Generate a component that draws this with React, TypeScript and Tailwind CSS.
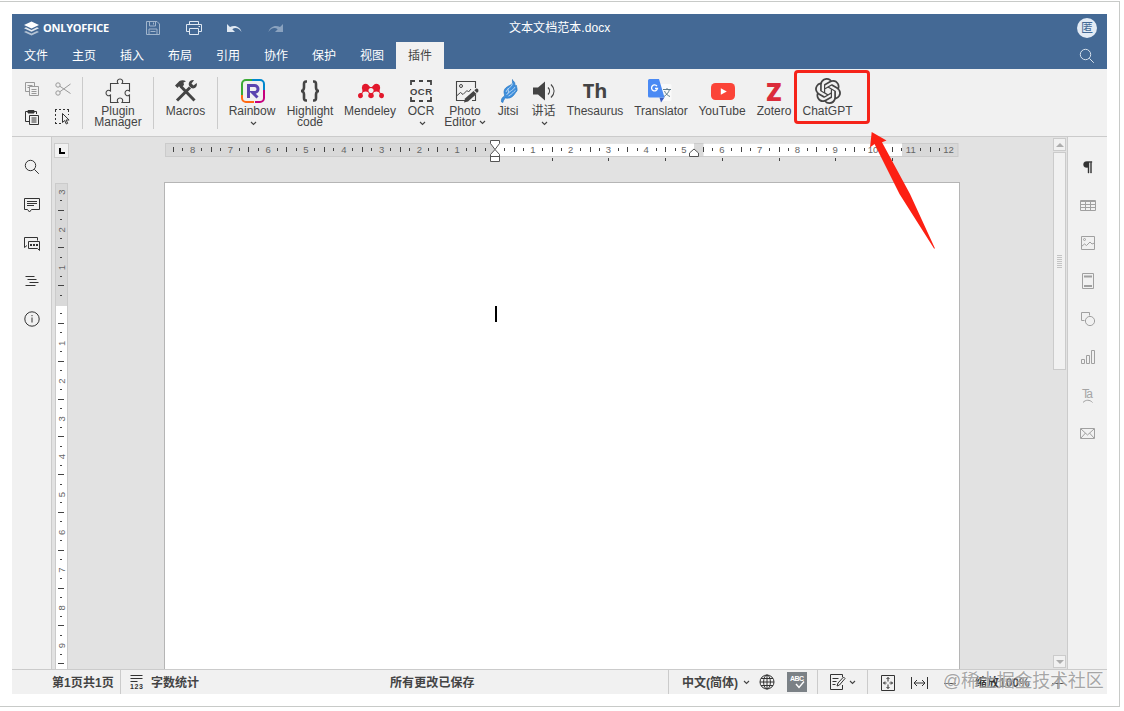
import { ReactNode } from 'react';
import { SiMendeley, SiOpenai } from 'react-icons/si';

const TABS = ['文件', '主页', '插入', '布局', '引用', '协作', '保护', '视图', '插件'];

const CM = 37.8;

function Svg({ w, h, className = '', children }: { w: number; h: number; className?: string; children: ReactNode }) {
  return (
    <svg width={w} height={h} viewBox={`0 0 ${w} ${h}`} fill="none" stroke="currentColor" className={`shrink-0 ${className}`}>
      {children}
    </svg>
  );
}

function Chevron({ className = '' }: { className?: string }) {
  return (
    <Svg w={7} h={5} className={className}>
      <path d="M1 1l2.5 2.5L6 1" strokeWidth="1.1" />
    </Svg>
  );
}

function SearchIcon() {
  return (
    <Svg w={16} h={16}>
      <circle cx="6.5" cy="6.5" r="5.2" />
      <path d="M10.3 10.3l4.5 4.5" />
    </Svg>
  );
}

/* ---------- header ---------- */

function Header() {
  return (
    <header className="flex h-[55px] flex-col bg-[#446995] text-white">
      <div className="flex h-7 items-center">
        <div className="flex w-[497px] items-center pl-3">
          <Svg w={15} h={15} className="mr-1">
            <path d="M0 4l7.5-3.6L15 4 7.5 7.6z" fill="#fff" stroke="none" />
            <path d="M0 7.2l2-.9 5.5 2.6L13 6.3l2 .9-7.5 3.6z" fill="#fff" fillOpacity=".85" stroke="none" />
            <path d="M0 10.9l2-.9 5.5 2.6L13 10l2 .9-7.5 3.6z" fill="#fff" fillOpacity=".6" stroke="none" />
          </Svg>
          <span className="w-[103px] pb-0.5 font-['Open_Sans',sans-serif] text-[11px] font-bold leading-none tracking-[-0.25px]">
            ONLYOFFICE
          </span>
          <div className="flex items-center text-[#dfe8f2]">
            <Svg w={14} h={14} className="opacity-60">
              <path d="M.5.5h10.5l2.5 2.5v10.5h-13zM3.500.5v4.500h6v-4.500M7.500 1.500v2M3 13.500v-5.500h8v5.500M4.500 10.500h5" />
            </Svg>
            <Svg w={16} h={14} className="ml-[26px]">
              <path d="M3.500 3.500v-3h9v3M3.500 10.500h-3v-7h15v7h-3M3.500 7.500h9v6h-9zM12.500 5.500h1.500" />
            </Svg>
            <Svg w={15} h={9} className="ml-[25px]">
              <path d="M0 0v8h8L5.300 5.300C8 3.200 12 3.800 14.500 8 13.500 3 7.800.2 3 3z" fill="currentColor" stroke="none" />
            </Svg>
            <Svg w={15} h={9} className="ml-[26px] opacity-45">
              <path d="M15 0v8H7l2.700-2.700C7 3.200 3 3.800.5 8 1.500 3 7.200.2 12 3z" fill="currentColor" stroke="none" />
            </Svg>
          </div>
        </div>
        <div className="flex-1 text-xs leading-none tracking-[0.05px]">文本文档范本.docx</div>
        <div className="mr-2.5 flex h-5 w-5 items-center justify-center rounded-full bg-[#e3ebf5] text-xs leading-none text-[#446995]">
          匿
        </div>
      </div>
      <nav className="flex h-[27px] items-stretch justify-between">
        <ul className="flex">
          {TABS.map((tab) => (
            <li
              key={tab}
              className={`flex w-12 items-center justify-center text-xs leading-none ${
                tab === '插件' ? 'bg-[#f1f1f1] text-[#444]' : ''
              }`}
            >
              {tab}
            </li>
          ))}
        </ul>
        <div className="mr-3 flex items-center text-[#d5e0ec]">
          <SearchIcon />
        </div>
      </nav>
    </header>
  );
}

/* ---------- plugins toolbar ---------- */

function ToolButton({ className, icon, lines, menu }: { className: string; icon: ReactNode; lines: ReactNode[]; menu?: boolean }) {
  return (
    <button className={`flex shrink-0 flex-col items-center ${className}`}>
      <span className="flex h-7 items-center justify-center text-[#444]">{icon}</span>
      {lines.map((line, i) => (
        <span key={i} className="flex h-[11px] items-center whitespace-nowrap text-xs leading-none">
          {line}
        </span>
      ))}
      {menu && <Chevron className="ml-0.5 mt-[5px]" />}
    </button>
  );
}

function Separator() {
  return <div className="h-[52px] w-px shrink-0 bg-[#cbcbcb]" />;
}

function ClipboardGroup() {
  return (
    <div className="-mt-px grid h-[52px] w-[70px] grid-cols-2 grid-rows-2 place-items-center pl-[5px] pr-1 text-[#333]">
      <Svg w={14} h={14} className="text-[#999]">
        <path d="M4 9.500H.5v-9h9V4M2.500 3.500h5M2.500 5.500h2M4.500 4.500h9v9h-9zM6.500 7.500h5M6.500 9.500h5M6.500 11.500h5" />
      </Svg>
      <Svg w={16} h={14} className="text-[#999]">
        <circle cx="3" cy="3" r="2.200" />
        <circle cx="3" cy="11" r="2.200" />
        <path d="M4.800 4.200L15.500 11.500M4.800 9.800L15.500 2" />
      </Svg>
      <Svg w={14} h={15} className="mt-1">
        <path d="M4 11.500H.5v-10h11V4" />
        <path d="M3 .5h6v2.500H3z" fill="currentColor" />
        <path d="M4.500 5.500h9v9h-9zM6.500 8h5M6.500 10h5M6.500 12h5" />
      </Svg>
      <Svg w={16} h={16} className="mt-1">
        <path d="M0 .5h14M.5 1v14M0 14.500h7M13.500 1v5" strokeDasharray="2 2" />
        <path d="M7.500 4.500v9l2.200-2 1.600 3.500 1.400-.7-1.600-3.300h3z" fill="#f1f1f1" />
      </Svg>
    </div>
  );
}

function PuzzleIcon() {
  return (
    <Svg w={26} h={26} className="mr-px">
      <path
        d="M5.500 5.500h7.500C11.500 3.500 12.500 1 15 1s3.500 2.500 2 4.500h7.500v7.500c-2-1.500-4.500-.5-4.500 2s2.500 3.500 4.500 2v7.500H17c1.500-2 .5-4.500-2-4.500s-3.500 2.500-2 4.500H5.500V17c-2 1.500-4.500.5-4.500-2s2.500-3.500 4.500-2z"
        strokeWidth="1.100"
      />
    </Svg>
  );
}

function MacrosIcon() {
  return (
    <Svg w={24} h={24}>
      <path d="M7 7.500L20.500 21.500" strokeWidth="3" />
      <path d="M3 21.500L16 8.500" strokeWidth="3" />
      <path d="M1 6.500L5.500 2c2-1 4.500-1 6.500.3L9.500 3.500 10 6 6.500 9 5 7.200 3.500 9z" fill="currentColor" stroke="none" />
      <path d="M20 1.200l-2.500 3.300 2 2 3.200-2.500c1 3.500-2 6.500-5.500 5l-2-2C13.500 3.500 17 .2 20 1.200z" fill="currentColor" stroke="none" />
    </Svg>
  );
}

function RainbowIcon() {
  return (
    <Svg w={26} h={26} className="ml-0.5">
      <g strokeWidth="2">
        <path d="M2 17V6a4 4 0 0 1 4-4h6" stroke="#3aaa35" />
        <path d="M12 2h8a4 4 0 0 1 4 4v6" stroke="#0087cd" />
        <path d="M24 12v8a4 4 0 0 1-4 4h-5" stroke="#c6007e" />
        <path d="M14 24H6a4 4 0 0 1-4-4v-3" stroke="#ff6a13" />
      </g>
      <path d="M8.500 20V7.500h6a3.500 3.500 0 0 1 0 7h-2l5 5" stroke="#5b45b0" strokeWidth="3" />
    </Svg>
  );
}

function BracesIcon() {
  return (
    <Svg w={20} h={22}>
      <path d="M7 1.500H6C4.300 1.500 4 2.500 4 4v3.500C4 9.500 3 11 1 11c2 0 3 1.500 3 3.500V18c0 1.500.3 2.500 2 2.500h1" strokeWidth="2.600" />
      <path d="M13 1.500h1c1.700 0 2 1 2 2.500v3.500c0 2 1 3.500 3 3.500-2 0-3 1.500-3 3.500V18c0 1.500-.3 2.500-2 2.500h-1" strokeWidth="2.600" />
    </Svg>
  );
}

function OcrIcon() {
  return (
    <Svg w={24} h={24}>
      <path d="M2 6V2h4M10 2h4M18 2h4v4M22 18v4h-4M14 22h-4M6 22H2v-4" strokeWidth="1.800" />
      <text x="12" y="15.500" fontSize="9.500" fontWeight="700" textAnchor="middle" textLength="22" fill="#444" stroke="none">
        OCR
      </text>
    </Svg>
  );
}

function PhotoIcon() {
  return (
    <Svg w={24} h={24} className="ml-1">
      <path d="M10 21.500H1.500v-19h19V9M20.500 16v5.500H17" strokeWidth="1.100" />
      <circle cx="6" cy="7" r="1.500" />
      <path d="M1.500 17l4-3.500 2.500 2 4-4 1.500 1.500 2.500-3" />
      <path d="M9 23.500l1-4L18.500 12l3 3-8.500 7.500z" fill="currentColor" stroke="none" />
      <path d="M19.300 11.200l1.700-1.500c1.500-.5 3 1 2.300 2.500L22 14z" fill="currentColor" stroke="none" />
    </Svg>
  );
}

function JitsiIcon() {
  return (
    <Svg w={18} h={25} className="ml-px">
      <path
        d="M12.500.5c-.3 2 .5 3.200-.5 4.500C9.500 7 4.500 8 4 12.500c-.2 2 .8 3 .5 4.500C2 18.500 1 20 1.500 23l1.500.5c.3-2 1-3.300 2.500-4.500 3 .8 6-.3 8-2.500 1.500-1.500 2-3.500 3.500-4.500.5-2.500-.5-3.500-.5-5.500-1-.5-1.500-.5-2 0 1-2 .2-4-2-5z"
        fill="#3f8fdc"
        stroke="#2474bd"
        strokeWidth=".6"
      />
      <path d="M12.500 4.500c-.5 4-5.500 4.500-6.500 8.500M15 8c-1.500 3.500-5.500 3.500-8.500 8M15.500 11.500c-2 1-3 3.500-7 5.500M8 9.500c0 2 1 3 0 5" stroke="#cfe3f6" strokeWidth=".8" />
    </Svg>
  );
}

function SpeakerIcon() {
  return (
    <Svg w={24} h={20}>
      <path d="M1 6.500h5l7-6v19l-7-6H1z" fill="currentColor" stroke="none" />
      <path d="M16 6.500c2 2 2 5 0 7M19 3.500c4 4 4 9 0 13" strokeWidth="1.200" />
    </Svg>
  );
}

function TranslateIcon() {
  return (
    <Svg w={24} h={24} className="mr-0.5">
      <path d="M9 5h13a1.500 1.500 0 0 1 1.500 1.500v14A1.500 1.500 0 0 1 22 22h-8.500z" fill="#fafafa" stroke="none" />
      <path d="M11.500 18.500h5l-3.500 5z" fill="#3a5bbf" stroke="none" />
      <path d="M1.500 0h9.500l5.500 18.500h-15A1.500 1.500 0 0 1 0 17V1.500A1.500 1.500 0 0 1 1.500 0z" fill="#4a8af4" stroke="none" />
      <path d="M9 7.200A3 3 0 1 0 9.500 9.500H7" stroke="#fff" strokeWidth="1.300" />
      <path d="M15 10.500h8M19 9v1.500M21.500 10.500c-.8 3-3 5.500-5.500 7M16.500 12c1 2.500 3 4.500 5.500 5.500" stroke="#607d8b" />
    </Svg>
  );
}

function YoutubeIcon() {
  return (
    <Svg w={24} h={17} className="ml-0.5 mt-px">
      <rect width="24" height="17" rx="4.500" fill="#fb4438" stroke="none" />
      <path d="M9.800 5.200v6.600l6-3.300z" fill="#fff" stroke="none" />
    </Svg>
  );
}

function Toolbar() {
  return (
    <div className="flex h-[68px] border-b border-[#cbcbcb] bg-[#f1f1f1] pt-2 text-[#444]">
      <ClipboardGroup />
      <Separator />
      <ToolButton className="w-[70px]" icon={<PuzzleIcon />} lines={['Plugin', 'Manager']} />
      <Separator />
      <ToolButton className="w-[63px]" icon={<MacrosIcon />} lines={['Macros']} />
      <Separator />
      <div className="flex pl-[5px]">
        <ToolButton className="w-[58px]" icon={<RainbowIcon />} lines={['Rainbow']} menu />
        <ToolButton className="w-[58px]" icon={<BracesIcon />} lines={['Highlight', 'code']} />
        <ToolButton className="w-[62px]" icon={<SiMendeley size={26} color="#e2182c" className="ml-0.5" />} lines={['Mendeley']} />
        <ToolButton className="w-10" icon={<OcrIcon />} lines={['OCR']} menu />
        <ToolButton
          className="w-12"
          icon={<PhotoIcon />}
          lines={['Photo', <>Editor<Chevron className="ml-[3px] mt-0.5" /></>]}
        />
        <ToolButton className="w-[38px]" icon={<JitsiIcon />} lines={['Jitsi']} />
        <ToolButton className="w-[33px]" icon={<SpeakerIcon />} lines={['讲话']} menu />
        <ToolButton
          className="w-[70px]"
          icon={<span className="font-['Open_Sans',sans-serif] text-[20px] font-bold leading-none">Th</span>}
          lines={['Thesaurus']}
        />
        <ToolButton className="w-[62px]" icon={<TranslateIcon />} lines={['Translator']} />
        <ToolButton className="w-[60px]" icon={<YoutubeIcon />} lines={['YouTube']} />
        <ToolButton
          className="w-11"
          icon={<span className="font-['Open_Sans',sans-serif] text-[25px] font-extrabold leading-none text-[#db2c3a]">Z</span>}
          lines={['Zotero']}
        />
        <ToolButton className="w-[63px]" icon={<SiOpenai size={26} />} lines={['ChatGPT']} />
      </div>
    </div>
  );
}

/* ---------- side panels ---------- */

function LeftPanel() {
  return (
    <aside className="flex w-10 shrink-0 flex-col items-center border-r border-[#cbcbcb] bg-[#f1f1f1] pl-px pt-[11px] text-[#333]">
      <div className="flex h-[38px] items-center"><SearchIcon /></div>
      <div className="flex h-[38px] items-center">
        <Svg w={16} h={16}>
          <path d="M.5 1.500h15v11H7.500l-2 2.500-2-2.500h-3zM3 4.500h10M3 6.500h10M3 8.500h7" />
        </Svg>
      </div>
      <div className="flex h-[38px] items-center">
        <Svg w={16} h={16}>
          <path d="M3 10.500l-2.500 2V2.500h13v3M4.500 6.500h11v9l-2-2h-9z" />
          <path d="M6 10h8" strokeWidth="2" strokeDasharray="2 1" />
        </Svg>
      </div>
      <div className="flex h-[38px] items-center">
        <Svg w={14} h={16}>
          <path d="M.5 3.500h9M2.500 6.500h9M4.500 9.500h9M.5 12.500h10" />
        </Svg>
      </div>
      <div className="flex h-[38px] items-center">
        <Svg w={16} h={16}>
          <circle cx="8" cy="8" r="7.200" />
          <path d="M8 6.500v5M8 4v1.200" />
        </Svg>
      </div>
    </aside>
  );
}

function RightPanel() {
  const icons = [
    <path key="p" d="M12 2.500H6.500a2.800 2.800 0 0 0 0 6H8V14h1V3.500h1.500V14h1V3.500H12z" fill="#333" stroke="#333" strokeWidth=".4" />,
    <path key="t" d="M.5 3.500h15v10H.5zM.5 4.500h15M.5 7.500h15M.5 10.500h15M5.500 4v9.500M10.500 4v9.500" />,
    <g key="i">
      <path d="M1.500 1.500h13v13h-13zM1.500 11.500l3-2.500 2 1.500 3.500-3.500 2 2 2.500-1" />
      <circle cx="4.500" cy="4.500" r="1" />
    </g>,
    <g key="h">
      <path d="M2.500.5h11v15h-11z" />
      <path d="M4 3.500h8M4 13h8" strokeWidth="2" />
    </g>,
    <g key="s">
      <path d="M4.500 9.500h-3v-8h8v3" />
      <circle cx="10" cy="10" r="4.600" />
    </g>,
    <path key="c" d="M1.500 10.500h3v4h-3zM6.500 6.500h3v8h-3zM11.500 1.500h3v13h-3z" />,
    <g key="a">
      <text x="2" y="10.500" fontSize="12" textLength="11" fill="#a5a5a5" stroke="none">Ta</text>
      <path d="M3 15.500c2.500-3 7-3 9.500 0" />
    </g>,
    <path key="m" d="M.5 3.500h14v10H.5zM1 4l6.500 6L14 4M1 13l4.500-5M14 13L9.500 8" />,
  ];
  return (
    <aside className="flex w-10 shrink-0 flex-col items-center border-l border-[#cbcbcb] bg-[#f1f1f1] pt-[11px] text-[#a0a0a0]">
      {icons.map((icon, i) => (
        <div key={i} className="flex h-[38px] items-center pl-px">
          <Svg w={16} h={16} className="overflow-visible">{icon}</Svg>
        </div>
      ))}
    </aside>
  );
}

/* ---------- rulers ---------- */

// quarter-centimetre steps counted from the margin
function steps(from: number, to: number) {
  return Array.from({ length: to - from + 1 }, (_, i) => from + i).filter((q) => q !== 0);
}

function HorizontalRuler() {
  const zero = 330;
  return (
    <Svg w={795} h={22} className="block">
      <path d="M0 3h793.500v14H0z" fill="#cbcbcb" stroke="none" />
      <path d="M1 4h791.500v12H1z" fill="#d9d9d9" stroke="none" />
      <path d="M330 3.500h199v12.500H330zM538.500 3.500h198.500v12.500H538.500z" fill="#fff" stroke="none" />
      {steps(-34, 48).map((q) => {
        const x = zero + (q * CM) / 4;
        if (q === 21) return null;
        if (q % 4 === 0) {
          return (
            <text key={q} x={x} y="13" fontSize="9.500" textAnchor="middle" fill="#666" stroke="none">
              {Math.abs(q / 4)}
            </text>
          );
        }
        const h = q % 2 === 0 ? 2.500 : 1.500;
        return <path key={q} d={`M${Math.round(x) + (q < 0 ? -0.5 : 0.5)} ${9.5 - h}v${h * 2}`} stroke="#444" />;
      })}
      {[1, 2, 3, 4, 5, 6, 7].map((n) => (
        <path key={n} d={`M${Math.round(zero + n * CM * 1.5) + 0.5} 18v3`} stroke="#444" />
      ))}
      <g fill="#fff" stroke="#555">
        <path d="M325.500.5h9v3L330 9.500l-4.500-6z" />
        <path d="M330 9.500l4.500 5v7h-9v-7zM325.500 16.500h9" />
        <path d="M524.500 16.500v-3.500l4.500-4 4.500 4v3.500z" />
      </g>
    </Svg>
  );
}

function VerticalRuler() {
  const zero = 122.500;
  return (
    <Svg w={13} h={486} className="block">
      <path d="M0 0h13v486H0z" fill="#cbcbcb" stroke="none" />
      <path d="M1 1h11v122H1z" fill="#d9d9d9" stroke="none" />
      <path d="M1 123h11v363H1z" fill="#fff" stroke="none" />
      {steps(-12, 38).map((q) => {
        const y = zero + (q * CM) / 4;
        if (q % 4 === 0) {
          return (
            <text key={q} transform={`translate(10 ${y}) rotate(-90)`} fontSize="9.500" textAnchor="middle" fill="#666" stroke="none">
              {Math.abs(q / 4)}
            </text>
          );
        }
        const w = q % 2 === 0 ? 3 : 1;
        return <path key={q} d={`M${6 - w} ${Math.floor(y) - 0.5}h${w * 2}`} stroke="#444" />;
      })}
    </Svg>
  );
}

/* ---------- document area ---------- */

function Editor() {
  return (
    <main className="flex min-w-0 flex-1 bg-[#e2e2e2]">
      <div className="flex w-[17px] shrink-0 flex-col pl-0.5">
        <div className="mb-[25px] mt-1.5 flex h-[15px] w-[15px] items-center justify-center border border-[#cbcbcb] bg-[#f1f1f1]">
          <div className="h-1.5 w-1.5 border-b-2 border-l-2 border-black" />
        </div>
        <div className="pl-px">
          <VerticalRuler />
        </div>
      </div>
      <div className="ml-[95px] flex w-[797px] shrink-0 flex-col">
        <div className="h-[45px] pl-px pt-[3px]">
          <HorizontalRuler />
        </div>
        <div className="w-[796px] flex-1 border border-b-0 border-[#b5b5b5] bg-white pl-[330px] pt-[123px]">
          <div className="h-4 w-0.5 bg-black" />
        </div>
      </div>
      <div className="ml-auto flex w-3.5 flex-col pt-px">
        <div className="flex h-[13px] w-[13px] items-center justify-center border border-[#cbcbcb] bg-[#f1f1f1]">
          <div className="border-x-4 border-b-4 border-x-transparent border-b-[#adadad]" />
        </div>
        <div className="mt-px flex h-[218px] w-[13px] flex-col items-center justify-center gap-px border border-[#cbcbcb] bg-[#f1f1f1]">
          {[0, 1, 2, 3, 4, 5, 6].map((n) => (
            <div key={n} className="h-px w-[5px] bg-[#c4c4c4]" />
          ))}
        </div>
        <div className="mb-px mt-auto flex h-[13px] w-[13px] items-center justify-center border border-[#cbcbcb] bg-[#f1f1f1]">
          <div className="border-x-4 border-t-4 border-x-transparent border-t-[#adadad]" />
        </div>
      </div>
    </main>
  );
}

/* ---------- status bar ---------- */

function StatusBar() {
  return (
    <footer className="flex h-[25px] items-stretch border-t border-[#cbcbcb] bg-[#f1f1f1] text-xs font-bold leading-none text-[#444]">
      <div className="flex w-[109px] items-center border-r border-[#cbcbcb] pl-10 pt-px tracking-[0.1px]">第1页共1页</div>
      <div className="flex w-[257px] items-center pl-[9px]">
        <Svg w={14} h={16} className="mr-[7px] text-[#333]">
          <path d="M.5 1.500h12M.5 4.500h12M.5 7.500h7" />
          <text x="0" y="15" fontSize="7" fontWeight="700" textLength="13" fill="#333" stroke="none">123</text>
        </Svg>
        <span className="pt-px">字数统计</span>
      </div>
      <div className="flex w-[291px] items-center border-r border-[#cbcbcb] pl-3 pt-px tracking-[0.1px]">所有更改已保存</div>
      <div className="flex w-[149px] items-center border-r border-[#cbcbcb] pl-[13px]">
        <span className="w-[61px] whitespace-nowrap pt-px">中文(简体)</span>
        <Chevron />
        <Svg w={16} h={16} className="ml-[9px] text-[#333]">
          <circle cx="8" cy="8" r="7" />
          <ellipse cx="8" cy="8" rx="3.400" ry="7" />
          <path d="M8 1v14M1 8h14M2 4.500h12M2 11.500h12" />
        </Svg>
        <div className="ml-3 flex h-5 w-5 items-center justify-center bg-[#7b8186]">
          <Svg w={18} h={18} className="text-white">
            <text x="2" y="8" fontSize="7" textLength="14" fill="#fff" stroke="none">ABC</text>
            <path d="M8 11l3 3.500 5-6" strokeWidth="1.400" />
          </Svg>
        </div>
      </div>
      <div className="flex w-[50px] items-center border-r border-[#cbcbcb] pl-3">
        <Svg w={16} h={16} className="mr-[3px] text-[#333]">
          <path d="M12.500 3V.5H.5v15h12V11M2.500 4.500h6M2.500 7.500h4M2.500 10.500h3" />
          <path d="M7 12l1-3 5.500-6 1.500 1.500L9.500 11z" />
        </Svg>
        <Chevron />
      </div>
      <div className="flex items-center pl-[13px] pt-px text-[#333]">
        <Svg w={14} h={16}>
          <path d="M.5.500h13v15H.5zM7 2.500v4M7 9.500v4M2.500 8h3M8.500 8h3M5.500 4L7 2.500 8.500 4M5.500 12L7 13.500 8.500 12M4 6.500L2.500 8 4 9.500M10 6.500L11.500 8 10 9.500" />
        </Svg>
        <Svg w={17} h={12} className="ml-4">
          <path d="M.5 0v12M16.500 0v12M3 6h11M6 3L3 6l3 3M11 3l3 3-3 3" />
        </Svg>
        <Svg w={12} h={12} className="ml-4">
          <path d="M0 6.500h12" />
        </Svg>
        <span className="ml-[19px] w-[77px] whitespace-nowrap">缩放100%</span>
        <Svg w={12} h={12}>
          <path d="M0 6.500h12M6 .5v12" />
        </Svg>
      </div>
    </footer>
  );
}

export default function App() {
  return (
    <div className="relative h-[711px] w-[1124px] overflow-hidden bg-white pt-px font-['Liberation_Sans','Noto_Sans_CJK_SC',sans-serif]">
      <div className="h-[706px] w-[1120px] border-y border-r border-[#c8cac8] pl-3 pt-3">
        <div className="flex h-[680px] w-[1095px] flex-col">
          <Header />
          <Toolbar />
          <div className="flex min-h-0 flex-1">
            <LeftPanel />
            <Editor />
            <RightPanel />
          </div>
          <StatusBar />
        </div>
      </div>

      {/* callout around the ChatGPT button */}
      <div className="absolute left-[794px] top-[70px] h-[54px] w-[76px] rounded border-[3px] border-[#f5231a]" />
      <svg className="absolute left-[866px] top-[128px]" width="74" height="124" viewBox="0 0 74 124">
        <path d="M5.700 4L20.500 12.500 16 14.200 44 66 69 120.500 68 120.500 33.500 66 8.500 16 4 19.500z" fill="#fc2013" />
      </svg>

      <div className="absolute left-[943px] top-[670px] whitespace-nowrap text-[18px] leading-[22px] tracking-[-0.2px] text-[#8f8f8f]/80 [text-shadow:0_0_2px_#fff]">
        @稀土掘金技术社区
      </div>
    </div>
  );
}
